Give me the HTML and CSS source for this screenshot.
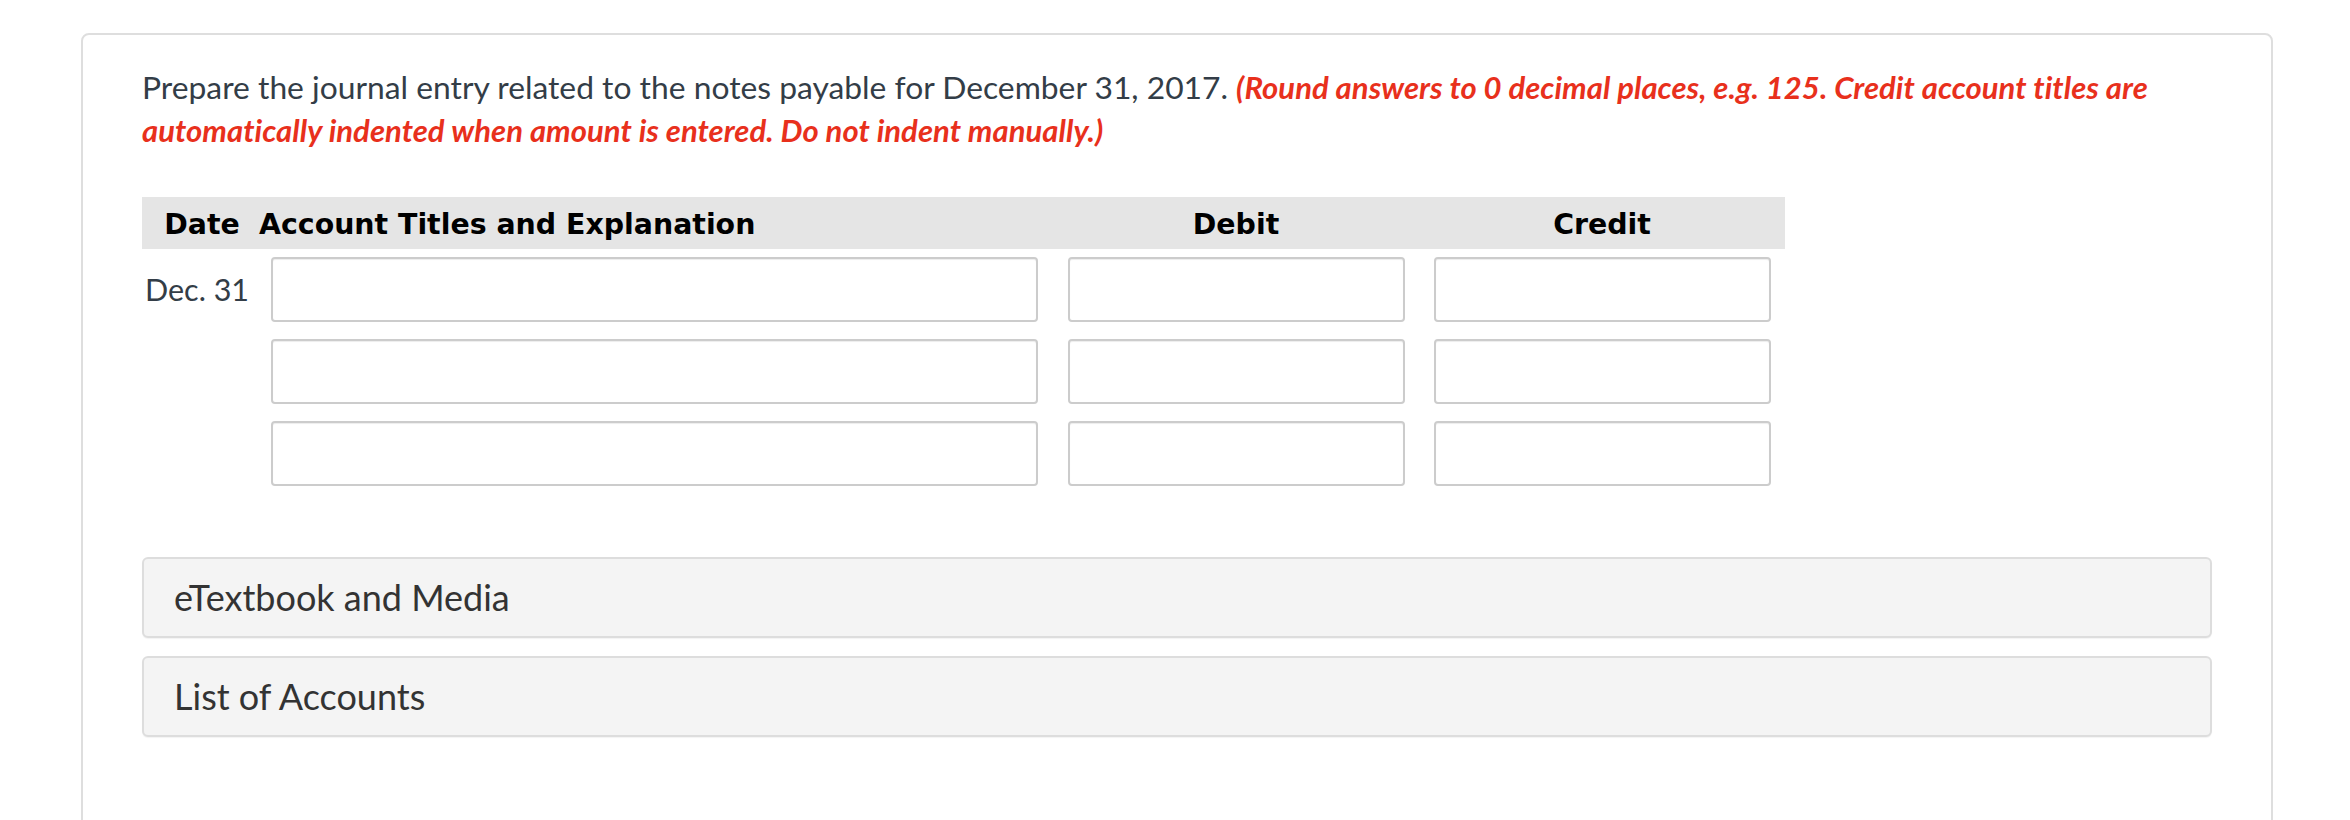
FILE: index.html
```html
<!DOCTYPE html>
<html lang="en">
<head>
<meta charset="utf-8">
<title>Journal entry</title>
<link rel="stylesheet" href="styles.css">
</head>
<body>
<div class="page">
  <div class="card">
    <p class="prompt">Prepare the journal entry related to the notes payable for December 31, 2017. <em class="note">(Round answers to 0 decimal places, e.g. 125. Credit account titles are automatically indented when amount is entered. Do not indent manually.)</em></p>

    <div class="journal">
      <div class="jhead">
        <div class="h-date">Date</div>
        <div class="h-acct">Account Titles and Explanation</div>
        <div class="h-num">Debit</div>
        <div class="h-num">Credit</div>
      </div>
      <div class="jbody">
        <div class="date">Dec. 31</div>
        <input class="in acct" type="text">
        <input class="in num" type="text">
        <input class="in num" type="text">

        <div class="date"></div>
        <input class="in acct" type="text">
        <input class="in num" type="text">
        <input class="in num" type="text">

        <div class="date"></div>
        <input class="in acct" type="text">
        <input class="in num" type="text">
        <input class="in num" type="text">
      </div>
    </div>

    <div class="panels">
      <div class="panel">eTextbook and Media</div>
      <div class="panel">List of Accounts</div>
    </div>
  </div>
</div>
</body>
</html>
```

FILE: styles.css
```css
html, body {
  margin: 0;
  padding: 0;
  background: #ffffff;
}

body {
  font-family: Lato, "Open Sans", sans-serif;
  color: #333d47;
  overflow: hidden;
  font-variant-ligatures: none;
}

.page {
  padding: 33px 0 0 81px;
}

.card {
  width: 2192px;
  box-sizing: border-box;
  min-height: 900px;
  border: 2px solid #dedede;
  border-radius: 8px;
  padding: 31px 59px 0 59px;
}

.prompt {
  margin: 0;
  font-size: 31.8px;
  line-height: 42.5px;
  color: #333d47;
}

.note {
  font-style: italic;
  font-weight: 700;
  font-size: 31px;
  letter-spacing: 0.05px;
  color: #e8301c;
}

.journal {
  margin-top: 45.5px;
  width: 1643px;
}

.jhead,
.jbody {
  display: grid;
  grid-template-columns: 117px 794px 366px 366px;
}

.jhead {
  background: #e5e5e5;
  height: 52px;
  box-sizing: border-box;
  padding-top: 5px;
  font-family: "DejaVu Sans", Verdana, sans-serif;
  font-weight: 700;
  font-size: 28.4px;
  line-height: 46px;
  color: #000000;
}

.h-date {
  text-align: center;
  padding-left: 3px;
}

.h-acct {
  text-align: left;
}

.h-num {
  text-align: center;
}

.jbody {
  margin-top: 8px;
  row-gap: 17px;
  align-items: center;
}

.date {
  font-size: 30.5px;
  padding-left: 3px;
  color: #333d47;
}

.in {
  box-sizing: border-box;
  height: 65px;
  margin: 0;
  border: 2px solid #cccccc;
  border-radius: 4px;
  background: #ffffff;
  box-shadow: inset 0 1px 1px rgba(0, 0, 0, 0.075);
  font-family: Lato, sans-serif;
  font-size: 28px;
  padding: 0 10px;
}

.acct {
  width: 767px;
  margin-left: 12px;
}

.num {
  width: 337px;
  justify-self: center;
}

.panels {
  margin-top: 71px;
  display: flex;
  flex-direction: column;
  gap: 18px;
}

.panel {
  height: 81px;
  box-sizing: border-box;
  background: #f4f4f4;
  border: 2px solid #dddddd;
  border-radius: 6px;
  box-shadow: 0 1px 1px rgba(0, 0, 0, 0.05);
  padding-left: 30px;
  font-size: 36px;
  line-height: 77px;
  color: #333333;
}
```
